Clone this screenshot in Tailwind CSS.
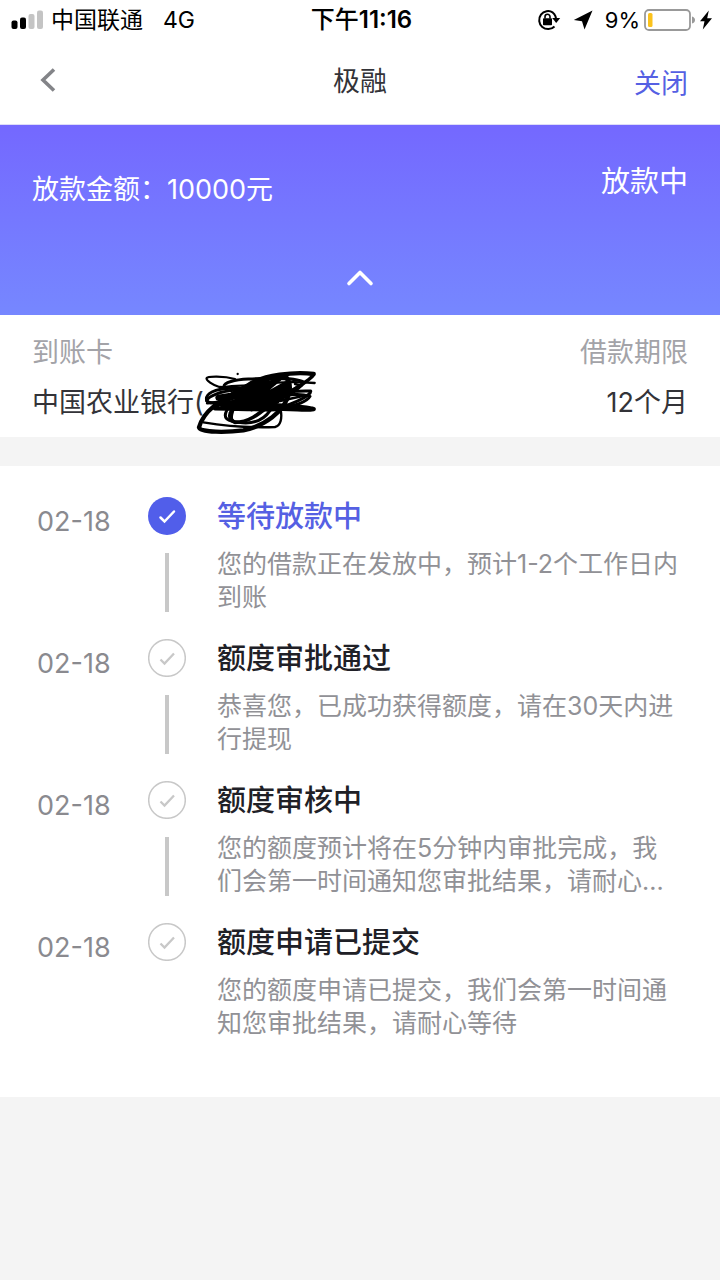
<!DOCTYPE html>
<html lang="zh-CN">
<head>
<meta charset="utf-8">
<meta name="viewport" content="width=device-width, initial-scale=1">
<title>极融</title>
<script src="https://cdn.jsdelivr.net/npm/@tailwindcss/browser@4"></script>
</head>
<body class="min-h-screen bg-[#f4f4f4] font-['Inter','Noto_Sans_CJK_SC',sans-serif] text-[27px] text-[#333338]">
<header class="border-b border-[#dddcf8] bg-white">
  <div class="grid h-10 grid-cols-[1fr_auto_1fr] items-center pr-2 pl-[11px] text-[23px] leading-10 text-black">
    <div class="flex items-center gap-2">
      <svg class="h-5 w-8" viewBox="0 0 32 20" aria-hidden="true">
        <rect x="0.5" y="10.5" width="6" height="8.500" rx="2"/>
        <rect x="9" y="7.500" width="6" height="11.500" rx="2"/>
        <rect x="17.500" y="4" width="6" height="15" rx="2" fill="#c4c4c4"/>
        <rect x="26" y="0.500" width="6" height="18.500" rx="2" fill="#c4c4c4"/>
      </svg>
      <span>中国联通</span>
      <span class="ml-3">4G</span>
    </div>
    <div class="text-2xl leading-10 font-medium">下午<span class="font-semibold">11:16</span></div>
    <div class="flex items-center justify-end">
      <svg class="mr-3 h-[22px] w-6" viewBox="0 0 24 22" fill="none" stroke="#000" aria-hidden="true">
        <path d="M16 3.500A9 9 0 1 0 17.500 17.500M13.500 2.400A9 9 0 0 1 19 9.500" stroke-width="2"/>
        <path d="M15.200 9h8L19.200 14z" fill="#000" stroke="none"/>
        <rect x="6" y="9.300" width="9" height="7" rx="0.800" fill="#000" stroke="none"/>
        <path d="M8 9.500V7.800a2.500 2.500 0 0 1 5 0v1.700" stroke-width="1.600"/>
      </svg>
      <svg class="mr-3 h-5 w-5" viewBox="0 0 20 20" aria-hidden="true"><path d="M19.500 0.500L0.800 10l8.200 1.200 2.500 8.300z"/></svg>
      <span class="mr-1 text-[22px]">9%</span>
      <svg class="h-6 w-[52px]" viewBox="0 0 52 24" aria-hidden="true">
        <rect x="1" y="2" width="45" height="20" rx="4" fill="#fff" stroke="#999" stroke-width="1.800"/>
        <rect x="4" y="5" width="4.500" height="14" rx="1.500" fill="#fbc21c"/>
        <path d="M48 8.500q3 1 3 3.500t-3 3.500z" fill="#999"/>
      </svg>
      <svg class="ml-1 h-5 w-3" viewBox="0 0 12 20" aria-hidden="true"><path d="M8.800 0.500L0 11.200h4.500L2.800 19.500 12 8.300H7.200z"/></svg>
    </div>
  </div>
  <nav class="grid h-[84px] grid-cols-3 items-center px-8">
    <button type="button" aria-label="返回" class="justify-self-start pb-1 pl-2">
      <svg class="h-6 w-4" viewBox="0 0 16 24" fill="none" stroke="#838488" stroke-width="3.600" aria-hidden="true"><path d="M14 1.500L3 12l11 10.500"/></svg>
    </button>
    <h1 class="text-center">极融</h1>
    <a href="#" class="justify-self-end pt-1 text-[#5560e3]">关闭</a>
  </nav>
</header>
<main>
  <section class="flex h-[190px] flex-col justify-between bg-linear-to-b from-[#7468ff] to-[#7687ff] px-8 pt-[37px] pb-[27px] text-white">
    <div class="flex items-start justify-between">
      <p class="mt-2 leading-10">放款金额：10000元</p>
      <p class="text-[29px] leading-10">放款中</p>
    </div>
    <button type="button" aria-label="收起" class="self-center">
      <svg class="h-5 w-7" viewBox="0 0 28 20" fill="none" stroke="#fff" stroke-width="3.600" stroke-linecap="round" stroke-linejoin="round" aria-hidden="true"><path d="M3 15.500L14 4.500l11 11"/></svg>
    </button>
  </section>
  <section class="flex justify-between bg-white px-8 pt-[17px] pb-[13px]">
    <div>
      <p class="leading-[42px] text-[#a3a3a8]">到账卡</p>
      <p class="relative mt-2 leading-[42px]">中国农业银行(
        <svg class="absolute -top-3 left-[164px] h-[66px] w-[122px]" viewBox="48 33 366 198" fill="none" stroke="#000" stroke-width="9" stroke-linecap="round" stroke-linejoin="round" aria-hidden="true">
          <circle cx="173" cy="45" r="3.500" fill="#000" stroke="none"/>
          <path d="M165 60C130 50 82 52 80 57C77 64 98 78 118 84L195 88" stroke-width="7"/>
          <path d="M132 83C130 70 165 62 205 60S350 55 372 70C360 88 300 130 250 142"/>
          <path d="M134 84C165 78 205 82 245 76S350 68 404 72" stroke-width="7"/>
          <path d="M160 88C100 88 75 105 80 125C90 137 125 130 160 118S340 94 392 96C396 108 330 145 260 152"/>
          <path d="M170 93C120 96 85 112 80 125M82 132C140 126 200 130 260 120S350 100 390 112C382 126 350 140 300 148"/>
          <path d="M401 45C345 37 250 48 205 78C150 112 75 140 57 205C60 222 145 220 190 214C250 202 315 160 328 100C333 75 325 52 306 54C250 48 200 90 165 130" stroke-width="13"/>
          <path d="M400 47C390 68 325 98 290 122S220 190 165 190C140 178 150 160 160 150" stroke-width="11"/>
          <path d="M140 155C128 178 144 184 160 188M158 156C150 182 155 188 175 190C215 196 250 185 270 155"/>
          <path d="M70 190C145 202 235 206 285 204C302 200 307 178 302 153" stroke-width="7"/>
          <path d="M105 148C170 150 235 152 290 150S375 155 401 150C350 138 280 140 205 136" stroke-width="13"/>
          <path d="M110 142C160 100 230 50 320 55C335 80 315 110 270 130" stroke-width="12"/>
          <path d="M120 132C160 105 210 80 260 62L165 135L295 60L190 146L320 75L215 148L316 98L245 150M115 116L250 94L130 144L275 108L155 148L290 126" stroke-width="18"/>
          <path d="M310 112L365 76M300 126L382 108M345 75L365 80L330 106" stroke-width="7"/>
        </svg>
      </p>
    </div>
    <div class="text-right">
      <p class="leading-[42px] text-[#a3a3a8]">借款期限</p>
      <p class="mt-2 leading-[42px]">12个月</p>
    </div>
  </section>
  <section class="mt-[29px] bg-white pt-[31px] pr-4 pb-[57px] pl-[37px]">
    <ol class="flex flex-col gap-[26px] text-[25px] leading-[33px] text-[#919196]">
      <li class="flex">
        <time class="mt-[6px] w-[110px] shrink-0 text-[27px] leading-[38px] text-[#8a8a8f]">02-18</time>
        <div class="flex w-10 shrink-0 flex-col items-center gap-[18px]">
          <svg class="size-[38px]" viewBox="0 0 38 38" fill="none" aria-hidden="true"><circle cx="19" cy="19" r="19" fill="#515eea"/><path d="M12.500 20.500l4 4L26 14.500" stroke="#fff" stroke-width="2.500" stroke-linecap="round"/></svg>
          <div class="h-[59px] w-1 bg-[#c8c8c8]"></div>
        </div>
        <div class="ml-[30px]">
          <h2 class="mb-[11px] text-[29px] leading-10 font-medium text-[#5560e3]">等待放款中</h2>
          <p>您的借款正在发放中，预计1-2个工作日内<br>到账</p>
        </div>
      </li>
      <li class="-mt-px flex">
        <time class="mt-[6px] w-[110px] shrink-0 text-[27px] leading-[38px] text-[#8a8a8f]">02-18</time>
        <div class="flex w-10 shrink-0 flex-col items-center gap-[18px]">
          <svg class="size-[38px]" viewBox="0 0 38 38" fill="none" stroke="#c8c8c8" aria-hidden="true"><circle cx="19" cy="19" r="18.300" stroke-width="1.500"/><path d="M12.500 20.500l4 4L26 14.500" stroke-width="2.300"/></svg>
          <div class="h-[59px] w-1 bg-[#c8c8c8]"></div>
        </div>
        <div class="ml-[30px]">
          <h2 class="mb-[11px] text-[29px] leading-10 font-medium text-[#202026]">额度审批通过</h2>
          <p>恭喜您，已成功获得额度，请在30天内进<br>行提现</p>
        </div>
      </li>
      <li class="-mt-px flex">
        <time class="mt-[6px] w-[110px] shrink-0 text-[27px] leading-[38px] text-[#8a8a8f]">02-18</time>
        <div class="flex w-10 shrink-0 flex-col items-center gap-[18px]">
          <svg class="size-[38px]" viewBox="0 0 38 38" fill="none" stroke="#c8c8c8" aria-hidden="true"><circle cx="19" cy="19" r="18.300" stroke-width="1.500"/><path d="M12.500 20.500l4 4L26 14.500" stroke-width="2.300"/></svg>
          <div class="h-[59px] w-1 bg-[#c8c8c8]"></div>
        </div>
        <div class="ml-[30px]">
          <h2 class="mb-[11px] text-[29px] leading-10 font-medium text-[#202026]">额度审核中</h2>
          <p>您的额度预计将在5分钟内审批完成，我<br>们会第一时间通知您审批结果，请耐心...</p>
        </div>
      </li>
      <li class="-mt-px flex">
        <time class="mt-[6px] w-[110px] shrink-0 text-[27px] leading-[38px] text-[#8a8a8f]">02-18</time>
        <div class="flex w-10 shrink-0 flex-col items-center">
          <svg class="size-[38px]" viewBox="0 0 38 38" fill="none" stroke="#c8c8c8" aria-hidden="true"><circle cx="19" cy="19" r="18.300" stroke-width="1.500"/><path d="M12.500 20.500l4 4L26 14.500" stroke-width="2.300"/></svg>
        </div>
        <div class="ml-[30px]">
          <h2 class="mb-[11px] text-[29px] leading-10 font-medium text-[#202026]">额度申请已提交</h2>
          <p>您的额度申请已提交，我们会第一时间通<br>知您审批结果，请耐心等待</p>
        </div>
      </li>
    </ol>
  </section>
</main>
</body>
</html>
